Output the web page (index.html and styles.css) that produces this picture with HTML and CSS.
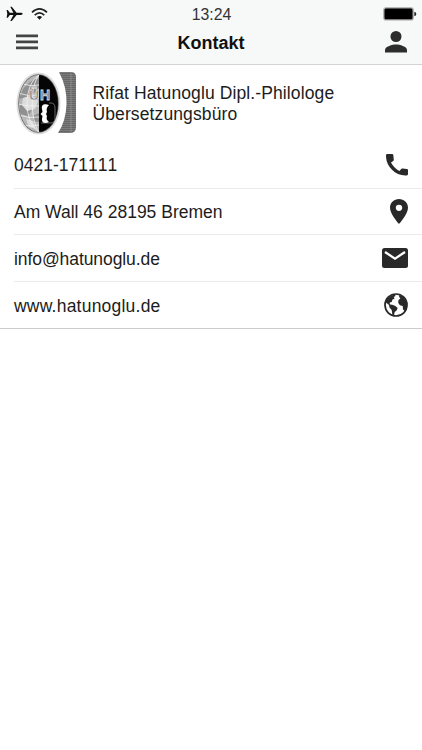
FILE: index.html
```
<!DOCTYPE html>
<html lang="de">
<head>
<meta charset="utf-8">
<title>Kontakt</title>
<link rel="stylesheet" href="styles.css">
</head>
<body>
<header class="header">
  <div class="status">
    <div class="status-left">
      <svg width="17" height="16" viewBox="0 0 17 16"><path d="M.6 4h1.200l2 2.800H7.400L4.300.7h1.500l4.800 6.100h4.200c1 0 1.900.5 1.900 1s-.9 1.100-1.900 1.100h-4.200L5.800 15H4.300l3.100-6.100H3.800l-2 2.800H.6l.7-3.900z" fill="#111"/></svg>
      <svg width="17" height="12" viewBox="0 0 17 12"><g fill="none" stroke="#222" stroke-width="1.700"><path d="M1 4.400Q8.500-2.600 16 4.400"/><path d="M3.700 7.200Q8.500 2.700 13.300 7.200"/></g><path d="M5.900 9.100Q8.500 6.800 11.100 9.100L8.500 11.800z" fill="#111"/></svg>
    </div>
    <span class="time">13:24</span>
    <svg class="battery" width="34" height="14" viewBox="0 0 34 14"><rect x=".9" y=".9" width="29.200" height="12" rx="2" fill="#000" stroke="#a8a4a6" stroke-width="1.200"/><path d="M31.300 4.800q2 .3 2 2.200t-2 2.200z" fill="#222"/></svg>
  </div>
  <div class="nav">
    <svg width="22" height="16" viewBox="0 0 22 16"><path d="M0 .5h22v2.700H0zM0 6.500h22v2.700H0zM0 12.500h22v2.700H0z" fill="#444"/></svg>
    <h1 class="title">Kontakt</h1>
    <svg width="22" height="22" viewBox="0 0 22 22"><circle cx="11" cy="5.500" r="5.500" fill="#2d2d2d"/><path d="M0 21.600v-2.700c0-3.600 7.300-5.500 11-5.500s11 1.900 11 5.500v2.700z" fill="#2d2d2d"/></svg>
  </div>
</header>
<main class="card">
  <div class="company">
    <svg class="logo" width="62" height="66" viewBox="0 0 62 66">
      <defs>
        <clipPath id="globe"><ellipse cx="23.500" cy="32.500" rx="19.500" ry="28.500"/></clipPath>
        <pattern id="hatch" width="4" height="2" patternUnits="userSpaceOnUse"><rect width="4" height="2" fill="#7c7c7c"/><path d="M0 .5h4" stroke="#606060" stroke-width=".8"/></pattern>
      </defs>
      <ellipse cx="23.500" cy="32.500" rx="22" ry="31" fill="#ddd"/>
      <ellipse cx="23.500" cy="32.500" rx="20.200" ry="29.200" fill="#666"/>
      <g clip-path="url(#globe)">
        <path d="M3 2h21v62H3z" fill="#b7b7b7"/>
        <path d="M24 2h21v62H24z" fill="#050505"/>
        <path d="M8 18q7-9 16-11v10l-8 8-12 3zM5 34l9-3 4 6-5 8-8-2zM18 45l6-3v9l-6-1z" fill="#909090"/>
        <path d="M8 27l9-3 6 6-3 8-8 2-5-6zM11 48l7 2 3 8-7-2z" fill="#dcdcdc"/>
        <g fill="none" stroke="#f2f2f2" stroke-width=".8"><path d="M24 4C8 14 8 51 24 61M24 4C15 15 15 49 24 61M3 22q10 4 21 2M3 33q10 3 21 2M4 44q10 4 20 2M8 54q8 2 16 0M8 13q8 3 16 1"/></g>
        <path d="M34 32h2q4 0 4 5v10q0 5-5 5h-9" fill="none" stroke="#666" stroke-width="1"/>
        <path d="M34 34c-5-2-8 0-7 4l.5 3-2 2 2 2-.5 3c-.5 4 3 5 7 3-2-2-3-3-2-6l-1-2 1-2c-1-3 0-5 2-7z" fill="#fff"/>
      </g>
      <g class="logo-text"><text x="14" y="29">Ü</text><text x="25" y="29">H</text></g>
      <path d="M44 1h12q5 0 5 5v50q0 6-6 6H43q8-12 8.500-29T44 1z" fill="url(#hatch)"/>
      <path d="M56 2v59" stroke="#999" stroke-width=".7"/>
    </svg>
    <div class="company-name"><span class="company-line">Rifat Hatunoglu Dipl.-Philologe</span><br>Übersetzungsbüro</div>
  </div>
  <ul class="list">
    <li class="row"><span class="label label-phone">0421-171111</span>
      <svg width="22" height="22" viewBox="0 0 22 22"><path d="M1.200 0h4.900q1.100 0 1.200 1.100l.5 4.600q0 .8-.6 1.200L5 8.500q3 5.700 8.500 8.600l1.900-2.300q.5-.5 1.200-.4l4.300.5q1.100.1 1.100 1.200v4q0 1.200-1.200 1.300C9.500 22.300-.5 12.500 0 1.200Q.1 0 1.200 0z"/></svg></li>
    <li class="row"><span class="label">Am Wall 46 28195 Bremen</span>
      <svg width="18" height="25" viewBox="5 2 14 20" preserveAspectRatio="none"><path d="M12 2C8.130 2 5 5.130 5 9c0 5.250 7 13 7 13s7-7.750 7-13c0-3.870-3.130-7-7-7zm0 9.500a2.500 2.500 0 1 1 0-5 2.500 2.500 0 0 1 0 5z"/></svg></li>
    <li class="row"><span class="label label-mail">info@hatunoglu.de</span>
      <svg width="26" height="20" viewBox="0 0 26 20"><path d="M2.500 0h21Q26 0 26 2.500v15q0 2.500-2.500 2.500h-21Q0 20 0 17.500v-15Q0 0 2.500 0z"/><path d="M3 4l10 6.700L23 4" fill="none" stroke="#fff" stroke-width="2.300"/></svg></li>
    <li class="row"><span class="label label-web">www.hatunoglu.de</span>
      <svg width="24" height="24" viewBox="0 0 24 24"><circle cx="12" cy="12" r="11" fill="#fff" stroke="#292929" stroke-width="1.700"/><path d="M2 8Q5 2.500 11 1.500l.5 1.500-1.900 1 1 1.500-2.300 1.200-.4 2.100-2.300 1 .4 1.700 2.300.2 3.100 1.300 2.200 2-.8 2.300-2.100 1.700-.8 3.500-1.500-.7-.7-4.700-2.200-2.700-.5-2.300L2 9.500z"/><path d="M15 2l4 1.700 3.700 5.300.2 5-2 4-1.900-1.500-.3-3.500-2.800-.7-1.700-2.500.3-2.700 1.900-1.600-1.200-1.500z"/></svg></li>
  </ul>
</main>
</body>
</html>
```
FILE: styles.css
```
* { box-sizing: border-box; }
body {
  margin: 0;
  background: #fff;
  color: #1c1c1c;
  font: 17.5px/21px "Liberation Sans", Arial, sans-serif;
}
svg { display: block; flex: none; }
.header {
  height: 65px;
  background: #f7f9f9;
  border-bottom: 1px solid #d2d4d4;
}
.status {
  display: grid;
  grid-template-columns: 1fr auto 1fr;
  height: 28px;
  padding: 0 5px 0 6px;
  align-items: center;
}
.status-left { display: flex; align-items: center; gap: 8px; }
.battery { justify-self: end; }
.time { font-size: 15.8px; color: #333; }
.nav {
  display: flex;
  justify-content: space-between;
  align-items: center;
  height: 28px;
  padding: 0 15.5px;
}
.title { margin: 0; font-size: 18px; line-height: 28px; padding-top: 1px; color: #111; }
.card { border-bottom: 1px solid #ccc; }
.company { display: flex; height: 77px; padding: 6px 0 0 15px; }
.logo-text { font: bold 14px "Liberation Sans", Arial, sans-serif; fill: #777; stroke: #ddd; stroke-width: .8px; opacity: .99; }
.company-name { margin: 12px 0 0 15.5px; letter-spacing: .11px; }
.list { margin: 0; padding: 0 0 0 14px; list-style: none; }
.row {
  display: flex;
  justify-content: space-between;
  align-items: center;
  height: 46.6px;
  padding-right: 14px;
  border-bottom: 1px solid #ebebeb;
}
.row:last-child { border-bottom: 0; height: 46px; }
.row svg { fill: #292929; }
.label { padding-top: 2px; }
.label-phone { font-kerning: none; }
.label-mail { padding-top: 3px; letter-spacing: -.08px; }
.label-web { padding-top: 3px; letter-spacing: .22px; }
```
